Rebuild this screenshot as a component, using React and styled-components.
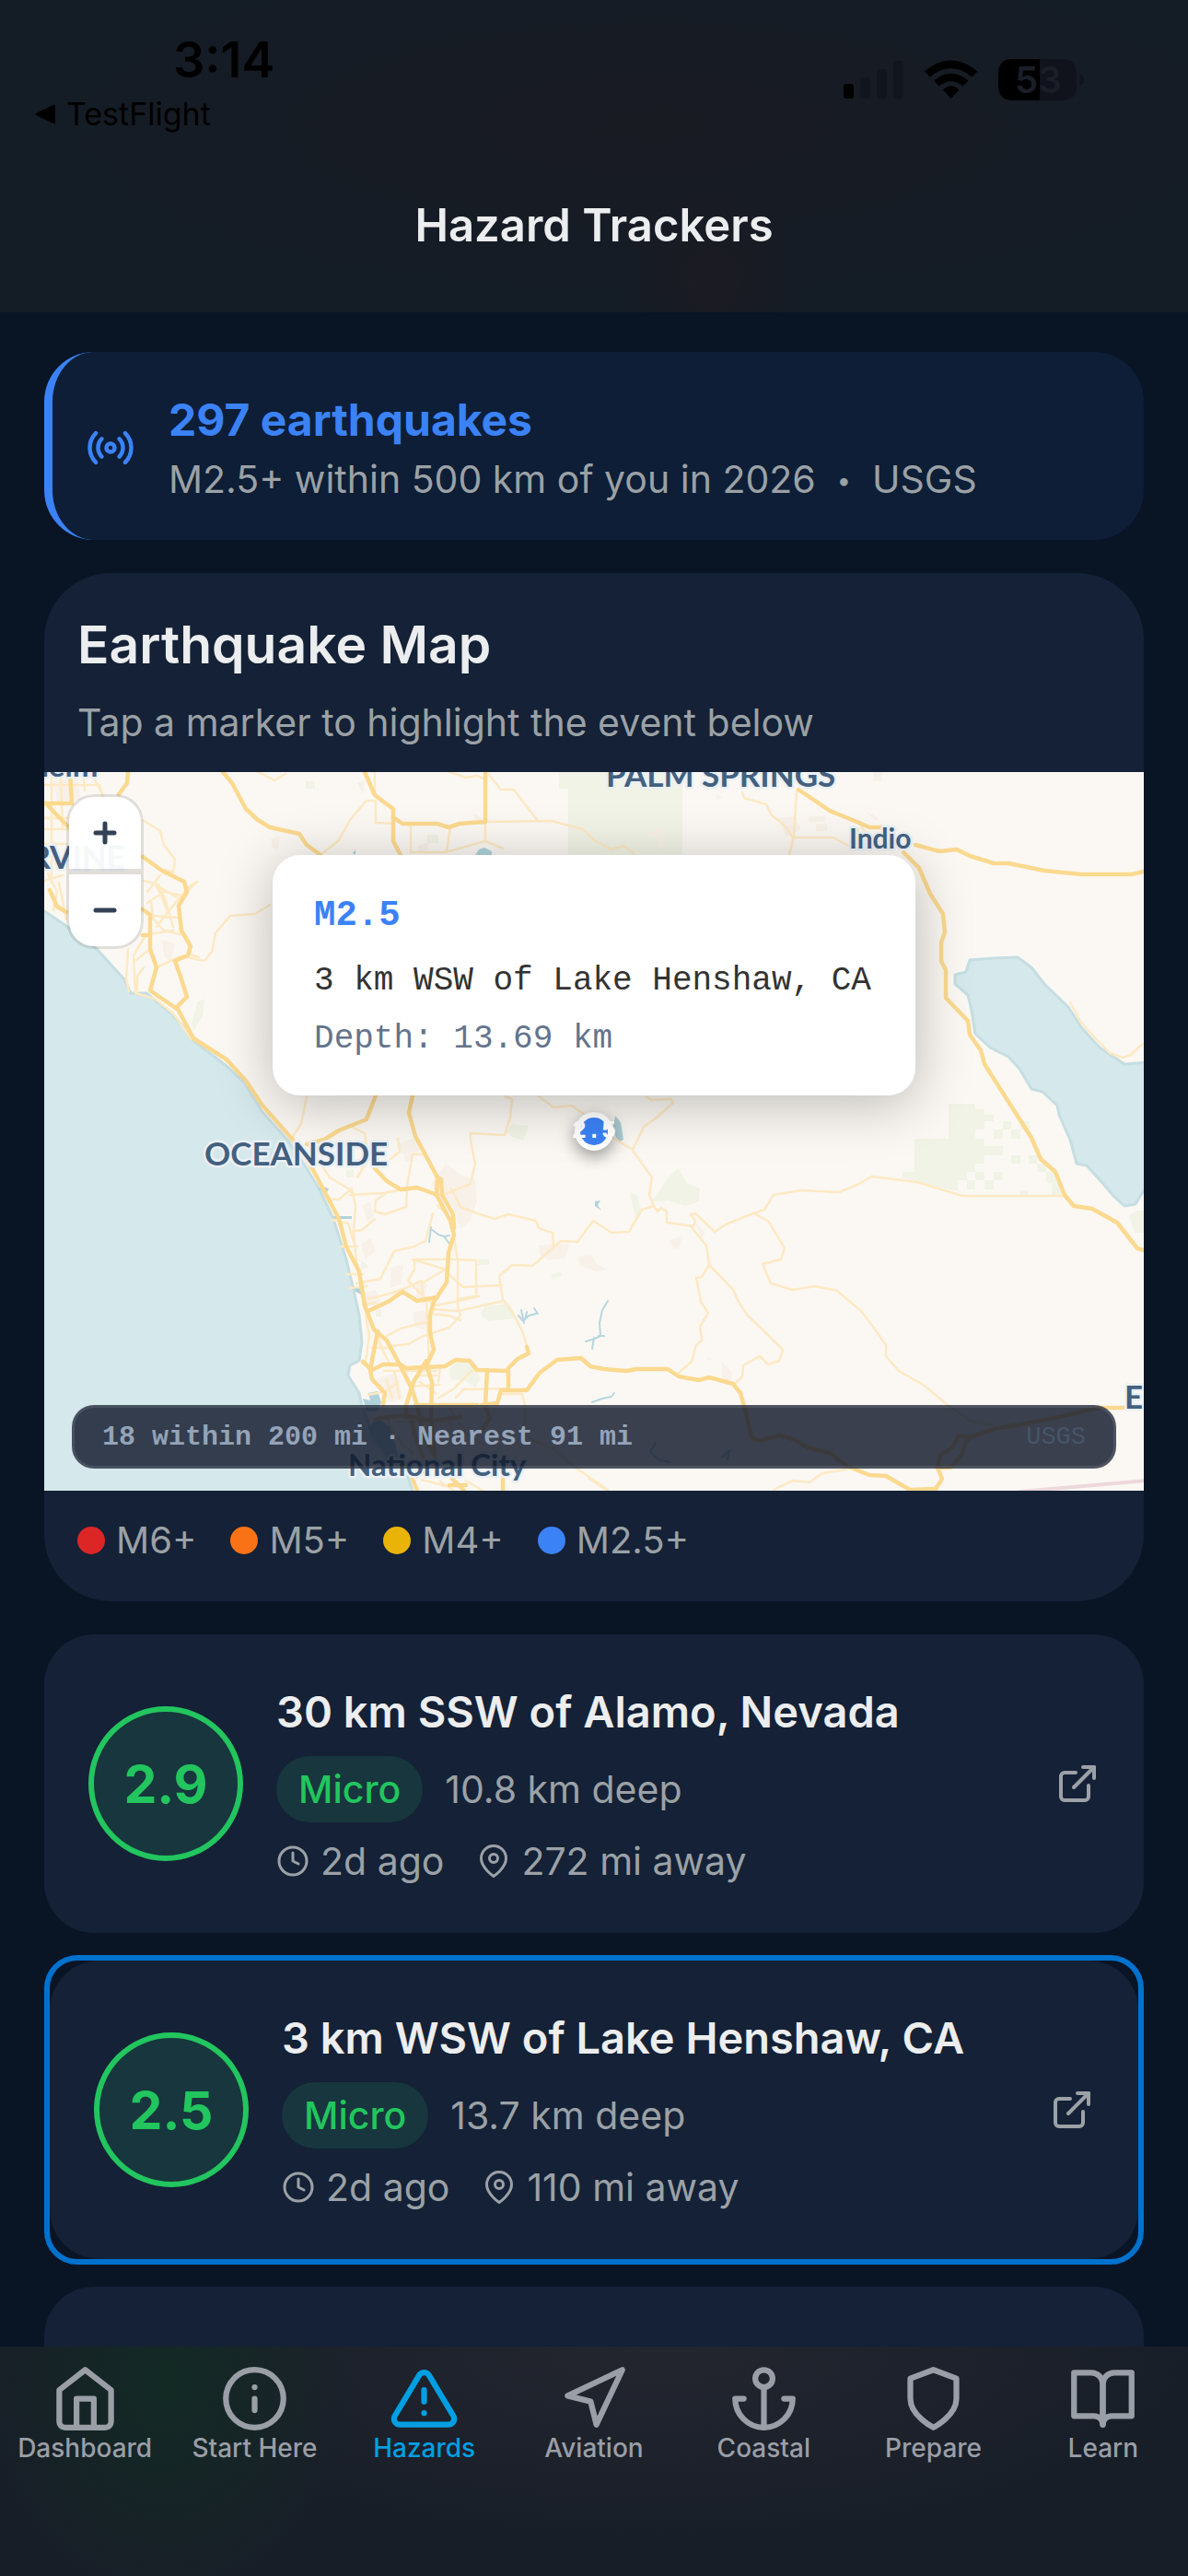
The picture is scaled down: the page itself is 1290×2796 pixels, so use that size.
import React from 'react'
import styled, { createGlobalStyle, css } from 'styled-components'
import { FiRadio, FiClock, FiMapPin, FiExternalLink, FiHome, FiInfo, FiAlertTriangle, FiNavigation, FiAnchor, FiShield, FiBookOpen } from 'react-icons/fi'

const GlobalStyle = createGlobalStyle`
    html, body, #root {
        height: 100%;
        margin: 0;
    }
    body {
        background: #091425;
        font-family: Inter, Roboto, sans-serif;
        color: #ecedee;
    }
    * {
        box-sizing: border-box;
    }
    svg {
        display: block;
        flex: none;
    }
`

const MAJOR_ROADS = [
    'M91 0L90 12L81 24', 'M0 34H30M28 0L30 34M2 34L16 49L26 59', 'M6 128L14 146L24 152',
    'M107 92L128 107L152 119L155 130L146 145L149 172L159 189L156 199L142 205L148 222L155 244L144 255L162 289L198 312L219 335L237 362L269 398L292 432L308 462L320 485L328 515L342 542L348 579L358 605L372 617L387 645L399 669L405 687L412 720L425 745',
    'M107 149L115 155V192L122 212L115 237L144 257M107 177H115',
    'M194 0L204 12L219 40L232 52L245 60L277 67L285 79L300 90',
    'M348 0L359 25L379 40V75L387 90',
    'M379 49L389 56H427L439 60L451 56L479 54V0',
    'M819 19L853 42L885 55L896 60H911',
    'M946 79L972 86L991 84L1005 91L1031 99H1047L1086 107L1126 111H1181L1194 108',
    'M933 87L950 104L962 132L976 154L978 174L974 185V205L979 215V245L1003 270L1005 285L1017 302L1021 317L1072 397L1082 420L1098 434L1108 459L1118 471L1138 474L1165 489L1187 517L1194 519',
    'M400 351L396 370L403 395L411 410L427 440L426 459L441 487L445 502L439 522L437 554L423 575L419 589V609L423 627L415 644L421 662L420 700L424 740',
    'M427 440L431 442L432 459L444 480L445 495',
    'M360 351L353 369L350 377L320 389L304 399L285 404',
    'M358 429L372 444L387 453L405 451L427 459',
    'M352 585L375 574L389 564L405 574L427 570',
    'M346 640L356 649L368 643H387L393 647L435 645L447 638L462 639L470 649L504 650V667',
    'M504 647L514 637L526 631L524 624',
    'M403 687H470M475 687L492 685L496 671H524L538 652L557 638L583 636L593 645L608 648L632 650L643 648H677L689 656L711 660L722 657L748 664L756 674L762 695L768 722L776 726L798 720L813 724L829 733L853 739L871 753L896 763L914 764L940 779L968 778L975 767L970 755',
    'M970 755L973 742L987 732L993 720L1005 722L1035 712L1066 707L1106 699L1146 690H1172',
    'M970 755H984L996 742L1000 728L1005 722',
    'M481 649L479 687L484 702L476 712',
    'M362 607L354 649L356 659L370 674L368 687',
    'M415 639L401 662L393 687V700',
    'M360 702L392 698L420 704L452 700M398 700L404 725L412 745',
    'M443 767L456 780M498 767V780M399 765L405 780M440 774H458',
]

const MINOR_ROADS = [
    'M8 0V120M18 8L20 60M0 14H60L64 30M0 62H28M0 78H24M42 0L44 20M0 50H30M10 95L30 90M54 6L66 30',
    'M4 110L14 130L10 150M16 120L22 150L24 160M0 118L20 112',
    'M300 90L320 74L332 52L350 31H360V55L379 56M359 0V25',
    'M398 56V87H435L443 85L479 75L498 83M441 59L437 87M479 54V75',
    'M479 54L551 53L585 62L597 74L616 84L630 80L640 89',
    'M482 2L496 19H510L522 35L536 53M440 0L458 6L470 4L479 8M232 0L250 9L262 2',
    'M107 52L126 64L130 79L142 95L140 109L132 106',
    'M245 144L229 154L202 156L186 175L182 195L174 205L150 200M156 197L168 201',
    'M166 119L150 134L130 130L112 142M166 119L158 124L140 145L122 168M108 118L124 122L132 140L140 168M112 130L126 112M116 140L118 156L148 158M120 120L128 136L134 152M110 150L130 172L148 176M115 176L140 172M124 124L144 136',
    'M91 192L89 225L92 238M109 179L97 199L99 240M115 192L100 204M122 212L148 200M101 240V222L108 212',
    'M99 240L120 246L140 262L160 290',
    'M285 352L279 382L269 397M332 384L348 392L352 420L340 440',
    'M500 352L508 355L506 375L500 394L463 392V400L468 425L463 447L433 459',
    'M536 351L553 364L573 362L587 372',
    'M653 352L659 356L681 355L683 359L665 375L651 385L639 410L618 397L600 382',
    'M640 412L660 440L657 459L662 471L649 475L635 499L616 500L596 487L579 510L561 509L530 536L508 535L494 547L498 572L510 589L520 609L526 629',
    'M662 471L666 477L670 473L676 477V489L705 493L707 487L702 480L707 479L728 499L740 491L770 479L782 475L792 459L821 454L863 456L885 447L898 439L948 445L997 460H1106',
    'M770 479L786 487L804 517L800 529L780 534L789 555L813 562L837 558L861 563L887 585L900 602L914 622V634L928 650L956 666L981 687L1007 705L1031 709L1030 714',
    'M702 493L719 514L722 535L714 548L708 549L713 575L721 587L712 602L714 617L708 622L703 640L689 652',
    'M722 535L736 549L748 562L754 575L764 590L784 609L802 627L798 639L786 643L777 634L759 644L758 656L750 664',
    'M442 452L452 472L470 479L489 485L504 480L534 487L537 495L552 500L553 514',
    'M332 459L369 457L404 450M400 415L394 449L393 472L370 480L359 477L360 465L374 455M400 415H412',
    'M332 499L345 497L359 485M422 479L414 509L402 515L380 520L365 550L339 555M306 463L320 464L334 452L338 470L336 500L340 540',
    'M402 529H449L469 530V569L449 572M402 529V540L395 552L415 572L425 579L445 575L472 569M445 507L449 529V579',
    'M410 555L435 540M410 555L412 575M439 545L455 559L497 557M400 529L436 540M427 470L440 484',
    'M352 572L379 565L395 559L410 552M346 578L360 576M422 583L449 585L499 574M419 588L440 590L452 595',
    'M372 612L387 604L415 597M375 623L395 621L412 612L440 603L452 590L449 579M415 575L418 645',
    'M349 590L353 612L349 639M362 612L366 624L375 642M356 625H378M399 667L429 665M369 650H425M372 660L378 680M380 650L386 680',
    'M429 679L445 669L465 649H480M447 679L455 670L504 669M495 675H519L522 687V720M404 655H426M408 662L425 674M430 647L428 662M384 662L372 672L352 676',
    'M300 425L310 440L330 452L336 458M312 486L330 490L336 510M322 515H340M328 545H346M332 560L350 558M384 398L386 412L376 420',
    'M372 700L380 720L400 740M380 705H440L446 730M410 700L430 730M440 690L460 720L478 730M520 720L553 735L577 755L612 779',
    'M592 767L610 779M458 769L476 780M430 770L445 780M410 768L440 776',
    'M792 779L800 775L813 769L831 771L845 761L871 757',
    'M758 22L760 28L784 35L790 47L803 57L813 71H857L873 80M817 20L814 71L809 89M885 55L892 66L900 72M884 62L882 70',
    'M1114 250L1126 272L1138 285L1157 305L1171 310L1180 307L1190 297L1194 295',
]

const PARKS = [
    'M559 0H693V90H569V18H559Z',
    'M982 360H1011V366H1021V372H1031V379H1021V388H1011V398H1021V406H1031V416H1021V425H1011V434H1002V443H992V455L956 447L932 440V434H945V398H982Z',
    'M1002 379h10v9h-10zM1031 388h10v10h-10zM1041 379h9v9h-9zM1050 388h10v10h-10zM1060 379h10v9h-10zM1031 406h10v10h-10zM1050 416h10v9h-10zM1069 416h9v9h-9zM1078 425h10v9h-10zM1088 434h12v12h6v14h-12v-14h-6zM1011 434h10v9h-10zM1002 443h9v10h-9zM1021 443h10v10h-10zM1031 434h10v9h-10zM1060 454h8v6h-8z',
    'M660 466L676 442L688 430L698 446L712 452L711 466L696 471L678 465Z M636 456L644 460L648 476L642 484Z',
    'M478 580L505 577L512 593L482 596L474 588Z', 'M440 648L452 638L466 644L474 658L468 668L456 660L442 660Z',
    'M166 250L174 246L172 264L162 281L160 274Z', 'M502 390L508 382L526 384L520 400L508 396Z', 'M471 529h12v6h-12z', 'M550 546l10-4 2 5-10 3z',
    'M1178 482L1186 476H1194V500H1184Z', 'M284 10h10v8h-10zM340 12l8-3-2 14zM416 68h12v9h-12z', 'M328 432h8v8h-8zM344 530l8 6-8 6zM360 583h6v8h-6z',
]

const TOWNS = [
    'M10 10L36 6L40 30L14 32Z', 'M128 182L142 186L138 206L130 200Z', 'M246 72L256 70L254 84L248 82Z',
    'M436 425L452 437L468 442L470 466L462 488L452 496L444 472L432 466L420 448Z', 'M537 513L570 512L566 528L548 530L538 524Z',
    'M580 526L594 524L600 534L612 540L600 542L582 536Z', 'M344 512L354 506L360 520L348 530Z', 'M376 538L390 534L388 556L376 560Z',
    'M342 566L360 562L368 578L350 580Z', 'M404 552L416 556L412 574L404 570Z', 'M400 586L416 584L414 606L402 602Z',
    'M346 470L354 466L358 482L350 488Z', 'M384 404L404 396L408 410L394 424Z', 'M362 658L382 652L390 680L374 684Z',
    'M678 508L692 504L690 516L684 518Z', 'M704 484L718 500L714 506Z', 'M655 66L672 60L674 82L668 84L666 70L656 72Z',
    'M796 50L814 48L822 62L806 70Z', 'M830 48h18v6h-18zM838 56h12v8h-12zM892 42l14 8-4 3zM900 0h10v10h-10zM730 22l6 6-6 2z',
    'M406 80L418 76L416 86L404 87ZM464 44L476 50L474 58Z', 'M736 640L748 652L744 664L736 656ZM720 634l6 4-6 1z',
]

const LAKES = [
    'M620 373L626 380L629 399L624 402L617 389Z', 'M468 90L472 84L478 82L486 86L486 90Z', 'M335 88l3-4v6z',
    'M302 450L309 452L307 456L298 452Z', 'M314 482H334V485H316Z', 'M336 558L346 562L344 567L338 564Z',
    'M598 466L604 465L601 470L605 476L598 471Z', 'M346 680L354 682L352 674L362 672L366 684L362 694L350 694Z',
    'M362 700L376 712L384 740L396 756L376 748L360 728L352 712Z',
]

const STREAMS = [
    'M420 494L418 510M420 496L428 502L434 504L440 512M434 504L440 503', 'M515 590L520 596L526 590L534 588M518 584L521 598M532 582L536 588M524 586L522 594',
    'M612 574L606 584L603 598L604 612L598 615L588 618M597 614L595 626M602 612H608', 'M595 684L606 680L616 678L619 674',
    'M664 728L658 738L668 747L680 749M736 744L744 736L742 746',
]

const LABELS = [
    { x: 610, y: 16, size: 35, text: 'PALM SPRINGS' },
    { x: 874, y: 83, size: 30, text: 'Indio' },
    { x: 174, y: 427, size: 35, text: 'OCEANSIDE' },
    { x: 330, y: 764, size: 33, text: 'National City' },
    { x: -26, y: 105, size: 35, text: 'IRVINE' },
    { x: -72, y: 5, size: 33, text: 'Anaheim' },
    { x: 1173, y: 691, size: 35, text: 'El Centro' },
]

const LEGEND = [
    { color: '#dc2626', label: 'M6+' },
    { color: '#f97316', label: 'M5+' },
    { color: '#eab308', label: 'M4+' },
    { color: '#3b82f6', label: 'M2.5+' },
]

const QUAKES = [
    { mag: '2.9', place: '30 km SSW of Alamo, Nevada', depth: '10.8 km deep', ago: '2d ago', distance: '272 mi away' },
    { mag: '2.5', place: '3 km WSW of Lake Henshaw, CA', depth: '13.7 km deep', ago: '2d ago', distance: '110 mi away', selected: true },
]

const TABS = [
    { label: 'Dashboard', Icon: FiHome },
    { label: 'Start Here', Icon: FiInfo },
    { label: 'Hazards', Icon: FiAlertTriangle, active: true },
    { label: 'Aviation', Icon: FiNavigation },
    { label: 'Coastal', Icon: FiAnchor },
    { label: 'Prepare', Icon: FiShield },
    { label: 'Learn', Icon: FiBookOpen },
]

function StatusIcons() {
    return (
        <svg width="264" height="48" viewBox="0 0 264 48">
            <rect x="0" y="28" width="11" height="16" rx="3" fill="#000" />
            <rect x="18" y="21" width="11" height="23" rx="3" fill="#11161e" />
            <rect x="36" y="12" width="11" height="32" rx="3" fill="#11161e" />
            <rect x="54" y="3" width="11" height="41" rx="3" fill="#11161e" />
            <path d="M88 14.500Q116 -9.500 145.500 14.500L139.500 20.500Q116.500 2 94 20.500Z" fill="#000" />
            <path d="M98 24.500Q116.500 9 135.500 24.500L129.500 30.500Q116.500 20 104 30.500Z" fill="#000" />
            <path d="M108 34.500Q116.500 26 125.500 34.500L116.700 44Z" fill="#000" />
            <path d="M184 1H213V46H184Q168 46 168 30V17Q168 1 184 1Z" fill="#000" />
            <path d="M213 1H237Q253 1 253 17V30Q253 46 237 46H213Z" fill="#10131b" />
            <path d="M256 17Q261 19 261 23.500Q261 28 256 30Z" fill="#10131b" />
            <text x="186" y="38" fontFamily="Inter" fontSize="40" fontWeight="600" fill="#191e27">53</text>
        </svg>
    )
}

function BaseMap() {
    return (
        <MapDrawing viewBox="0 0 1194 780" preserveAspectRatio="xMidYMid slice">
            <rect width="1194" height="780" fill="#fbf8f3" />
            {PARKS.map(d => <path key={d} d={d} fill="#f0f3e5" />)}
            {TOWNS.map(d => <path key={d} d={d} fill="#f8f1e9" />)}
            <g fill="#d5e8eb" stroke="#c5dee2" strokeWidth="3" strokeLinejoin="round">
                <path d="M-4 148L24 167L57 192L87 225L94 240H111L138 262L150 275L160 290L198 319L217 337L237 369L265 400L285 430L300 455L314 485L328 529L336 562L342 589L345 619L342 639L332 644L330 655L342 674L345 687L352 705L356 725L372 745L395 765L401 784H-4Z" />
                <path d="M1005 204L1031 202L1057 201L1072 212L1086 230L1112 255L1126 277L1146 299L1173 317L1198 315V454H1194L1185 469L1173 471L1161 460L1150 447L1132 427L1121 425L1114 399L1102 372L1100 362L1084 347L1072 344L1059 322L1047 309L1027 299L1011 284L1007 259L1003 242L989 230V220L1001 217Z" />
            </g>
            {LAKES.map(d => <path key={d} d={d} fill="#b0d3da" />)}
            <g fill="none" strokeLinecap="round" strokeLinejoin="round">
                {STREAMS.map(d => <path key={d} d={d} stroke="#b7d7dd" strokeWidth="2" />)}
                {MINOR_ROADS.map(d => <path key={d} d={d} stroke="#fde9c4" strokeWidth="2.500" />)}
                {MAJOR_ROADS.map(d => <path key={d} d={d} stroke="#fbd98f" strokeWidth="4.500" />)}
                <path d="M1060 781L1198 769" stroke="#edd8dc" strokeWidth="4" />
            </g>
            {LABELS.map(({ x, y, size, text }) => (
                <text key={text} x={x} y={y} fontFamily="Lato, sans-serif" fontSize={size} fontWeight="700" fill="#44607f" stroke="#eaf0f5" strokeWidth="5" strokeLinejoin="round" paintOrder="stroke">{text}</text>
            ))}
        </MapDrawing>
    )
}

function QuakeCard({ quake }) {
    return (
        <QuakeFrame $selected={quake.selected}>
            <QuakeBody>
                <Magnitude>{quake.mag}</Magnitude>
                <QuakeInfo>
                    <QuakePlace>{quake.place}</QuakePlace>
                    <QuakeRow>
                        <Severity>Micro</Severity>
                        <span>{quake.depth}</span>
                    </QuakeRow>
                    <QuakeMeta>
                        <MetaItem><FiClock size={36} />{quake.ago}</MetaItem>
                        <MetaItem><FiMapPin size={36} />{quake.distance}</MetaItem>
                    </QuakeMeta>
                </QuakeInfo>
                <DetailsLink href="#details" aria-label={quake.place}><FiExternalLink size={48} /></DetailsLink>
            </QuakeBody>
        </QuakeFrame>
    )
}

function App() {
    return (
        <Screen>
            <GlobalStyle />
            <Header>
                <StatusBar>
                    <div>
                        <Time>3:14</Time>
                        <BackLink href="#testflight">
                            <svg width="22" height="22" viewBox="0 0 22 22"><path d="M20 1Q22 0 22 3V19Q22 22 20 21L1 12Q0 11 1 10Z" /></svg>
                            TestFlight
                        </BackLink>
                    </div>
                    <StatusIcons />
                </StatusBar>
                <Title>Hazard Trackers</Title>
            </Header>
            <Content>
                <Summary>
                    <FiRadio size={54} />
                    <div>
                        <SummaryTitle>297 earthquakes</SummaryTitle>
                        <Muted>M2.5+ within 500 km of you in 2026 &nbsp;<Bullet>•</Bullet>&nbsp; USGS</Muted>
                    </div>
                </Summary>
                <MapCard>
                    <MapHeading>
                        <MapTitle>Earthquake Map</MapTitle>
                        <Muted>Tap a marker to highlight the event below</Muted>
                    </MapHeading>
                    <MapArea>
                        <BaseMap />
                        <ZoomControl>
                            <ZoomButton aria-label="Zoom in">
                                <svg width="26" height="26" viewBox="0 0 26 26"><path d="M13 3V23M3 13H23" /></svg>
                            </ZoomButton>
                            <ZoomButton aria-label="Zoom out">
                                <svg width="26" height="26" viewBox="0 0 26 26"><path d="M3 13H23" /></svg>
                            </ZoomButton>
                        </ZoomControl>
                        <Marker>2.5</Marker>
                        <Popup>
                            <PopupMag>M2.5</PopupMag>
                            <PopupText>3 km WSW of Lake Henshaw, CA</PopupText>
                            <PopupText $dim>Depth: 13.69 km</PopupText>
                        </Popup>
                        <MapStatus>
                            <strong>18 within 200 mi · Nearest 91 mi</strong>
                            <MapSource>USGS</MapSource>
                        </MapStatus>
                    </MapArea>
                    <Legend>
                        {LEGEND.map(({ color, label }) => (
                            <LegendItem key={label}><Dot $color={color} />{label}</LegendItem>
                        ))}
                    </Legend>
                </MapCard>
                <QuakeList>
                    {QUAKES.map(quake => <QuakeCard key={quake.mag} quake={quake} />)}
                    <QuakeFrame><QuakeBody /></QuakeFrame>
                </QuakeList>
            </Content>
            <TabBar>
                {TABS.map(({ label, Icon, active }) => (
                    <Tab key={label} href={'#' + label} $active={active}>
                        <Icon size={75} />
                        {label}
                    </Tab>
                ))}
            </TabBar>
        </Screen>
    )
}

const Screen = styled.div`
    display: flex;
    flex-direction: column;
    height: 100vh;
    overflow: hidden;
`

const Header = styled.header`
    flex: none;
    padding-bottom: 64px;
    background:
        radial-gradient(circle at 60% 90%, #1c1b23 0, transparent 110px),
        radial-gradient(ellipse at 55% 40%, #191b23 0, transparent 65%),
        #141c25;
`

const StatusBar = styled.div`
    display: flex;
    justify-content: space-between;
    align-items: flex-start;
    padding: 33px 110px 0 38px;
    color: #000;
    > svg {
        margin-top: 30px;
    }
`

const Time = styled.div`
    padding-left: 150px;
    font-size: 54px;
    line-height: 64px;
    font-weight: 600;
`

const BackLink = styled.a`
    display: flex;
    align-items: center;
    gap: 12px;
    margin-top: 6px;
    font-size: 34px;
    line-height: 42px;
    font-weight: 400;
    color: #000;
    text-decoration: none;
`

const Title = styled.h1`
    margin: 70px 0 0;
    text-align: center;
    font-size: 49px;
    line-height: 60px;
    font-weight: 600;
`

const Content = styled.main`
    flex: 1;
    min-height: 0;
    overflow: hidden;
    padding: 43px 48px 0;
    display: flex;
    flex-direction: column;
    gap: 36px;
    > * {
        flex: none;
    }
`

const Muted = styled.p`
    margin: 0;
    font-size: 41px;
    line-height: 60px;
    color: #9ba1a6;
`

const Bullet = styled.span`
    font-size: 27px;
    line-height: 1;
    vertical-align: 4px;
`

const Summary = styled.section`
    display: flex;
    align-items: center;
    gap: 36px;
    padding: 39px 36px 36px;
    border-left: 9px solid #3b82f6;
    border-radius: 54px;
    background: #0d1e36;
    color: #3b82f6;
`

const SummaryTitle = styled.h2`
    margin: 0;
    font-size: 48px;
    line-height: 69px;
    font-weight: 700;
`

const MapCard = styled.section`
    border-radius: 72px;
    background: #142136;
`

const MapHeading = styled.div`
    padding: 42px 36px 24px;
`

const MapTitle = styled.h2`
    margin: 0 0 18px;
    font-size: 57px;
    line-height: 72px;
    font-weight: 600;
`

const MapArea = styled.div`
    position: relative;
    height: 780px;
    overflow: hidden;
    font-family: "Liberation Mono", monospace;
`

const MapDrawing = styled.svg`
    width: 100%;
    height: 100%;
`

const ZoomControl = styled.div`
    position: absolute;
    top: 24px;
    left: 24px;
    display: flex;
    flex-direction: column;
    border-radius: 30px;
    overflow: hidden;
`

const ZoomButton = styled.button`
    display: flex;
    align-items: center;
    justify-content: center;
    width: 84px;
    height: 84px;
    padding: 0;
    border: 3px solid rgba(0, 0, 0, 0.1);
    background: rgba(255, 255, 255, 0.95);
    background-clip: padding-box;
    &:first-child {
        border-radius: 30px 30px 0 0;
    }
    &:last-child {
        border-radius: 0 0 30px 30px;
    }
    path {
        stroke: #334155;
        stroke-width: 5;
        stroke-linecap: round;
    }
`

const Marker = styled.button`
    position: absolute;
    left: 50%;
    top: 390px;
    transform: translate(-50%, -50%);
    display: flex;
    align-items: center;
    justify-content: center;
    width: 42px;
    height: 42px;
    padding: 0;
    border: 6px solid #fff;
    border-radius: 50%;
    background: #3b82f6;
    box-shadow: 0 6px 18px rgba(0, 0, 0, 0.4);
    font-family: "Liberation Mono", monospace;
    font-size: 27px;
    font-weight: 700;
    color: #fff;
`

const Popup = styled.div`
    position: absolute;
    left: 50%;
    top: 90px;
    transform: translateX(-50%);
    padding: 39px 48px 30px 45px;
    border-radius: 30px;
    background: #fff;
    box-shadow: 0 9px 60px rgba(0, 0, 0, 0.25);
    white-space: nowrap;
`

const PopupMag = styled.div`
    margin-bottom: 12px;
    font-size: 39px;
    line-height: 54px;
    font-weight: 700;
    color: #3b82f6;
`

const PopupText = styled.div`
    font-size: 36px;
    line-height: 63px;
    color: ${props => props.$dim ? '#64748b' : '#333'};
`

const MapStatus = styled.div`
    position: absolute;
    left: 30px;
    right: 30px;
    bottom: 24px;
    display: flex;
    align-items: center;
    justify-content: space-between;
    height: 69px;
    padding: 0 30px;
    border: 3px solid rgba(255, 255, 255, 0.1);
    border-radius: 24px;
    background: rgba(15, 23, 42, 0.82);
    font-size: 30px;
    color: #94a3b8;
`

const MapSource = styled.span`
    font-size: 27px;
    color: #475569;
`

const Legend = styled.div`
    display: flex;
    gap: 37px;
    padding: 30px 36px 42px;
    font-size: 40px;
    line-height: 48px;
    color: #9ba1a6;
`

const LegendItem = styled.span`
    display: flex;
    align-items: center;
    gap: 12px;
`

const Dot = styled.i`
    width: 30px;
    height: 30px;
    border-radius: 50%;
    background: ${props => props.$color};
`

const QuakeList = styled.div`
    display: flex;
    flex-direction: column;
    gap: 24px;
`

const QuakeFrame = styled.article`
    ${props => props.$selected && css`
        border: 6px solid #0072ce;
        border-radius: 36px;
    `}
`

const QuakeBody = styled.div`
    display: flex;
    align-items: center;
    min-height: 324px;
    padding: 48px;
    border-radius: 54px;
    background: #142136;
    color: #9ba1a6;
`

const Magnitude = styled.div`
    display: flex;
    align-items: center;
    justify-content: center;
    width: 168px;
    height: 168px;
    margin-right: 36px;
    border: 6px solid #22c55e;
    border-radius: 50%;
    background: #17363d;
    font-size: 57px;
    font-weight: 700;
    color: #22c55e;
`

const QuakeInfo = styled.div`
    flex: 1;
    font-size: 41px;
    line-height: 60px;
`

const QuakePlace = styled.h3`
    margin: 0 0 12px;
    font-size: 47px;
    line-height: 72px;
    font-weight: 600;
    color: #ecedee;
`

const QuakeRow = styled.div`
    display: flex;
    align-items: center;
    gap: 24px;
`

const Severity = styled.span`
    padding: 6px 24px;
    border-radius: 36px;
    background: #17363d;
    font-weight: 500;
    color: #22c55e;
`

const QuakeMeta = styled.div`
    display: flex;
    gap: 36px;
    margin-top: 12px;
`

const MetaItem = styled.span`
    display: flex;
    align-items: center;
    gap: 12px;
`

const DetailsLink = styled.a`
    color: #9ba1a6;
`

const TabBar = styled.nav`
    display: grid;
    grid-template-columns: repeat(7, 1fr);
    flex: none;
    height: 249px;
    padding-top: 19px;
    background:
        radial-gradient(ellipse 200px 240px at 180px 40px, #132a24 0, transparent 100%),
        radial-gradient(ellipse at 55% 0, #23262f 0, transparent 60%),
        #181e28;
`

const Tab = styled.a`
    display: flex;
    flex-direction: column;
    align-items: center;
    font-size: 28px;
    line-height: 33px;
    font-weight: 500;
    text-decoration: none;
    white-space: nowrap;
    color: ${props => props.$active ? '#009fe3' : '#9a9ea6'};
`

export default App
